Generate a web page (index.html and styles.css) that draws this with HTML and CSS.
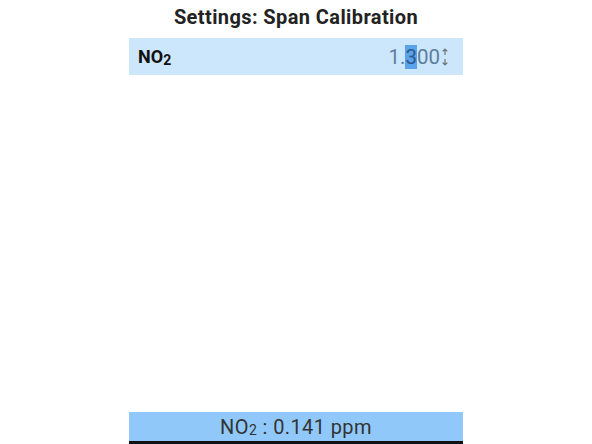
FILE: index.html
```html
<!DOCTYPE html>
<html>
<head>
<meta charset="utf-8">
<link rel="stylesheet" href="styles.css">
</head>
<body>
<div class="screen">
  <h1 class="title">Settings: Span Calibration</h1>
  <div class="row">
    <span class="label">NO<sub class="sub">2</sub></span>
    <span class="value">1.<span class="sel">3</span>00<svg class="spin" width="8" height="20" viewBox="0 0 8 20"><path d="M4 2 V8 M1.7 4.3 L4 2 L6.3 4.3" fill="none" stroke="#707070" stroke-width="1.2"/><path d="M4 18 V12 M1.7 15.7 L4 18 L6.3 15.7" fill="none" stroke="#707070" stroke-width="1.2"/></svg></span>
  </div>
  <div class="spacer"></div>
  <div class="status">NO<sub class="sub2">2</sub> : 0.141 ppm</div>
</div>
</body>
</html>
```
FILE: styles.css
```css
html, body { margin: 0; padding: 0; background: #fff; }
body { width: 592px; height: 444px; overflow: hidden; font-family: Roboto, "Liberation Sans", sans-serif; }
.screen { width: 334px; margin: 0 auto; height: 444px; display: flex; flex-direction: column; }
.title { margin: 0; height: 38px; padding-top: 3px; box-sizing: border-box; font-size: 20px; font-weight: 700; letter-spacing: 0.4px; color: #222; text-align: center; line-height: 28px; }
.row { height: 37px; background: #cce6fc; display: flex; align-items: center; justify-content: space-between; padding: 0 14px 0 9px; }
.label { font-weight: 700; font-size: 18px; color: #111; }
.sub { font-size: 14px; vertical-align: -2px; }
.value { font-size: 20.5px; color: #5c7e9c; display: flex; align-items: center; }
.sel { background: #5aa2ea; color: #2c5a8a; }
.spin { margin-left: 1px; }
.spacer { flex: 1; }
.status { height: 29px; background: #90c9f9; border-bottom: 3px solid #111; text-align: center; font-size: 20px; letter-spacing: 0.4px; line-height: 30px; color: #333; }
.sub2 { font-size: 14px; vertical-align: -1px; }
```
